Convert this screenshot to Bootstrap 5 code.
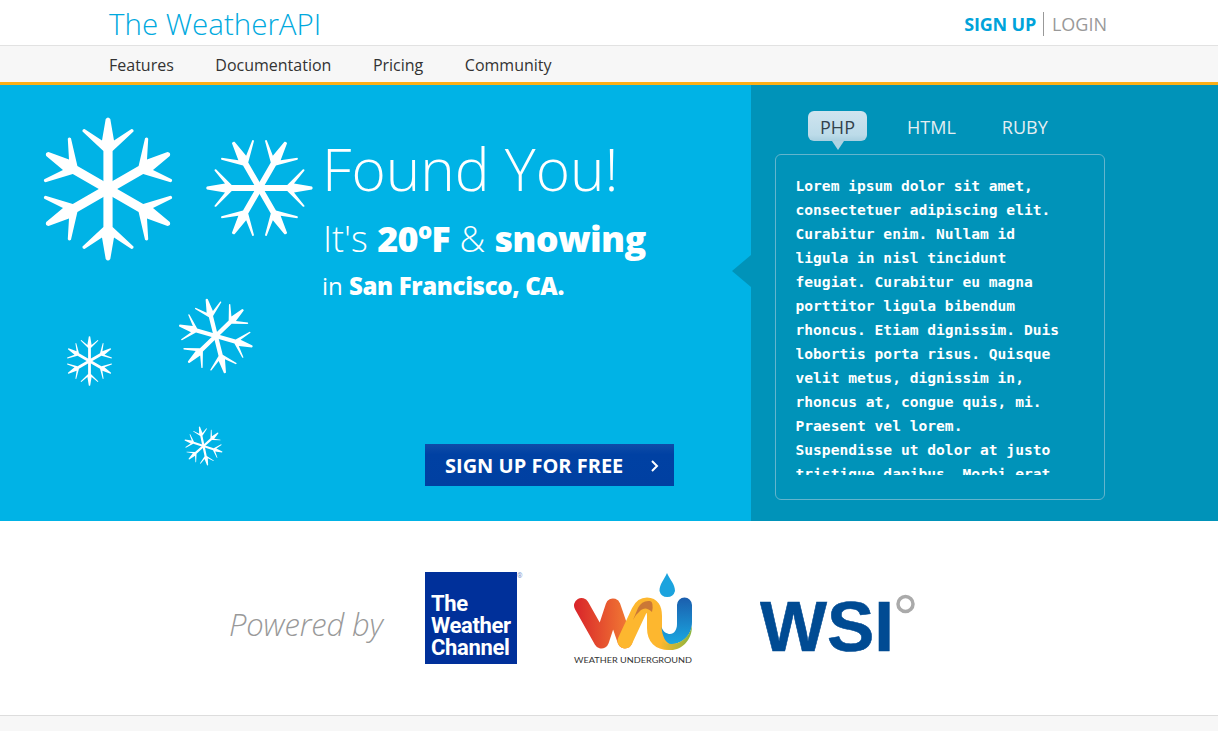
<!DOCTYPE html>
<html lang="en">
<head>
<meta charset="utf-8">
<title>The WeatherAPI</title>
<link href="https://cdn.jsdelivr.net/npm/bootstrap@5.3.0/dist/css/bootstrap.min.css" rel="stylesheet">
<style>
html,body{height:731px;overflow:hidden}
body{font-family:"Open Sans",sans-serif;color:#333;background:#fff}
.wrap{width:1000px;margin:0 auto}
.topbar{height:45px;padding-top:2px}
.brand{font-size:29.5px;font-weight:300;color:#00a9de;text-decoration:none;line-height:1}
.acct{font-size:18px;line-height:1;padding-right:2px}
.acct a{text-decoration:none}
.acct .up{color:#00a3da;font-weight:700;margin-right:2px;letter-spacing:-.15px}
.acct .in{color:#999;border-left:1px solid #999;padding-left:8px}
.mainnav{height:40px;background:#f7f7f7;border-top:1px solid #e2e2e2;border-bottom:3px solid #fcaf17}
.mainnav .wrap{gap:41.5px;height:36px;padding-top:2px}
.mainnav a{font-size:16px;color:#333;text-decoration:none}
.hero{height:436px}
.sky{width:751px;background:#00b3e6;color:#fff;position:relative;padding:43px 0 0 323px}
.flakes{position:absolute;left:0;top:0;width:751px;height:436px}
.found{font-size:58.5px;font-weight:300;line-height:80px;margin:0 0 0 -1px;position:relative;white-space:nowrap}
.temp{font-size:36px;font-weight:300;line-height:48px;margin:7px 0 0;position:relative;white-space:nowrap}
.place{font-size:24px;font-weight:400;line-height:32px;margin:7px 0 0 -1px;position:relative;white-space:nowrap}
.temp b{font-weight:800;letter-spacing:-.7px}
.place b{font-weight:800;letter-spacing:-.35px}
.cta{position:relative;display:flex;justify-content:space-between;align-items:center;width:249px;height:42px;margin:142px 0 0 102px;padding:2px 14px 0 20px;border:0;border-radius:0;background:linear-gradient(#0f4ca8,#0041a3 25%,#0040a2);color:#fff;font-size:20px;font-weight:700}
.cta svg{display:block}
.codepane{flex:1;background:#0093b9;position:relative;padding:26px 0 0 24px}
.codepane::before{content:"";position:absolute;left:-19px;top:170px;border-style:solid;border-width:16px 19px 16px 0;border-color:transparent #0093b9 transparent transparent}
.langs{height:30px;padding-left:33px}
.langs span{font-size:18px;line-height:32px;color:#e4eef2;font-weight:500}
.langs .on{position:relative;width:59px;height:30px;text-align:center;color:#33424c;border-radius:6px;background:linear-gradient(#cfe4ef 0,#bcdbe9 80%,#a9cfe0 100%)}
.langs .on::after{content:"";position:absolute;left:24px;top:30px;border-style:solid;border-width:9px 6px 0;border-color:#afd3e2 transparent transparent}
.langs .l2{margin-left:40px}
.langs .l3{margin-left:46px}
.codebox{width:330px;height:346px;margin-top:13px;border:1px solid #63b5cd;border-radius:6px;padding:19px 0 0 19.500px}
.codeclip{width:270px;height:301px;overflow:hidden;font-family:"DejaVu Sans Mono",monospace;font-size:14.6px;font-weight:700;line-height:24px;color:#fff}
.partners{height:194px;padding-left:229px}
.powered{font-size:31px;font-weight:300;font-style:italic;color:#999;width:196px;white-space:nowrap;position:relative;top:6px;letter-spacing:-.15px}
.twc{position:relative;width:92px;height:92px;background:#00309a;color:#fff;font-family:Roboto,sans-serif;font-weight:700;font-size:22px;letter-spacing:-.35px;padding:21px 0 0 6px}
.twc span{display:block;line-height:22px}
.twc sup{position:absolute;left:92px;top:1px;font-size:7px;line-height:1;color:#7f9bcf;font-weight:400}
.wulogo{margin-left:56px;display:block}
.wsilogo{margin-left:67px;display:block}
.foot{height:16px;background:#f7f7f7;border-top:1px solid #ddd}
</style>
</head>
<body>
<header class="topbar">
  <div class="wrap h-100 d-flex justify-content-between align-items-center">
    <a class="brand" href="#">The WeatherAPI</a>
    <div class="acct"><a class="up" href="#">SIGN UP</a> <a class="in" href="#">LOGIN</a></div>
  </div>
</header>
<nav class="mainnav">
  <div class="wrap d-flex align-items-center">
    <a href="#">Features</a><a href="#">Documentation</a><a href="#">Pricing</a><a href="#">Community</a>
  </div>
</nav>
<section class="hero d-flex">
  <div class="sky">
    <svg class="flakes" viewBox="0 0 751 436" aria-hidden="true">
      <defs>
        <path id="arm" d="M-4.6 0V-38L-25.5-57.5Q-26-60-23.5-60L-6-48.500-2.300-70Q0-73 2.300-70L6-48.500 23.500-60Q26-60 25.500-57.500L4.600-38V0Z" fill="#fff"/>
        <path id="thin" d="M-4 0V-37L-25-58Q-25.500-60-23.500-60L-6-46-2-70Q0-72 2-70L6-46 23.500-60Q25.500-60 25-58L4-37V0Z" fill="#fff"/>
        <g id="flake"><use href="#arm"/><use href="#arm" transform="rotate(60)"/><use href="#arm" transform="rotate(120)"/><use href="#arm" transform="rotate(180)"/><use href="#arm" transform="rotate(240)"/><use href="#arm" transform="rotate(300)"/></g>
        <g id="flake2"><use href="#thin"/><use href="#thin" transform="rotate(60)"/><use href="#thin" transform="rotate(120)"/><use href="#thin" transform="rotate(180)"/><use href="#thin" transform="rotate(240)"/><use href="#thin" transform="rotate(300)"/></g>
      </defs>
      <use href="#flake" transform="translate(108 104)"/>
      <use href="#flake2" transform="translate(259.500 103) rotate(90) scale(.75)"/>
      <use href="#flake2" transform="translate(215.800 251) rotate(-14) scale(.54)"/>
      <use href="#flake2" transform="translate(89.500 276) scale(.35)"/>
      <use href="#flake2" transform="translate(203.500 361) rotate(-12) scale(.28)"/>
    </svg>
    <h1 class="found">Found You!</h1>
    <p class="temp">It's <b>20ºF</b> &amp; <b>snowing</b></p>
    <p class="place">in <b>San Francisco, CA.</b></p>
    <button class="cta btn" type="button">SIGN UP FOR FREE
      <svg width="10" height="14" viewBox="0 0 10 14"><path d="M2 2l5 5-5 5" fill="none" stroke="#fff" stroke-width="2"/></svg>
    </button>
  </div>
  <div class="codepane">
    <div class="langs d-flex"><span class="on">PHP</span><span class="l2">HTML</span><span class="l3">RUBY</span></div>
    <div class="codebox">
      <div class="codeclip">Lorem ipsum dolor sit amet, consectetuer adipiscing elit. Curabitur enim. Nullam id ligula in nisl tincidunt feugiat. Curabitur eu magna porttitor ligula bibendum rhoncus. Etiam dignissim. Duis lobortis porta risus. Quisque velit metus, dignissim in, rhoncus at, congue quis, mi. Praesent vel lorem. Suspendisse ut dolor at justo tristique dapibus. Morbi erat</div>
    </div>
  </div>
</section>
<section class="partners d-flex align-items-center">
  <div class="powered">Powered by</div>
  <div class="twc"><span>The</span><span>Weather</span><span>Channel</span><sup>®</sup></div>
  <svg class="wulogo" width="120" height="94" viewBox="573 571 120 94" role="img" aria-label="Weather Underground">
    <defs>
      <linearGradient id="wuw" gradientUnits="userSpaceOnUse" x1="575" x2="635" y1="620" y2="620"><stop offset="0" stop-color="#d9252a"/><stop offset="1" stop-color="#f48535"/></linearGradient>
      <linearGradient id="wub" gradientUnits="userSpaceOnUse" x1="0" x2="0" y1="598" y2="645"><stop offset="0" stop-color="#1b5fae"/><stop offset="1" stop-color="#19a9e2"/></linearGradient>
      <linearGradient id="wug" gradientUnits="userSpaceOnUse" x1="660" x2="692" y1="640" y2="640"><stop offset="0" stop-color="#fdb72f"/><stop offset="1" stop-color="#86b53f"/></linearGradient>
    </defs>
    <path d="M667 573C670 580 675 584 675 591A8 8 0 0 1 659.500 591C659.500 584 664 580 667 573Z" fill="#1ba3de"/>
    <path d="M581.500 605.500L601.500 641L613 606L625 641" fill="none" stroke="url(#wuw)" stroke-width="15" stroke-linecap="round" stroke-linejoin="round"/>
    <path d="M625 641L639 611Q642 605 647 605Q654.500 605 654.500 616V628Q654.500 642.500 669 642.500" fill="none" stroke="#fdb72f" stroke-width="15" stroke-linecap="round" stroke-linejoin="round"/>
    <path d="M633 620L638 608Q642 600 650 601Q654 602 652 612Q646 606 641 610Q636 614 633 620Z" fill="#b9633a" opacity=".75"/>
    <path d="M677 605A7.500 7.500 0 0 1 692 605V622C692 636 682 644 671 644C666 644 662 636 661.500 627C663 632 667 634 670 634C674 634 677 630 677 624Z" fill="url(#wub)"/>
    <path d="M663 641C666 644 668 644 671 644C680 644 689 638 692 626C692 640 682 650 671 650C667 650 664 649 660 646Z" fill="url(#wug)"/>
    <text x="574" y="663" font-family="Lato,sans-serif" font-size="8" fill="#333" textLength="118" lengthAdjust="spacingAndGlyphs">WEATHER UNDERGROUND</text>
  </svg>
  <svg class="wsilogo" width="156" height="68" viewBox="759 584 156 68" role="img" aria-label="WSI">
    <text x="759" y="651" font-family="Liberation Sans,sans-serif" font-weight="700" font-size="71" fill="#004b93" stroke="#004b93" stroke-width=".6">WSI</text>
    <circle cx="904.500" cy="604" r="7.500" fill="none" stroke="#aaa" stroke-width="3.500"/>
  </svg>
</section>
<footer class="foot"></footer>
<script src="https://cdn.jsdelivr.net/npm/bootstrap@5.3.0/dist/js/bootstrap.bundle.min.js"></script>
</body>
</html>
